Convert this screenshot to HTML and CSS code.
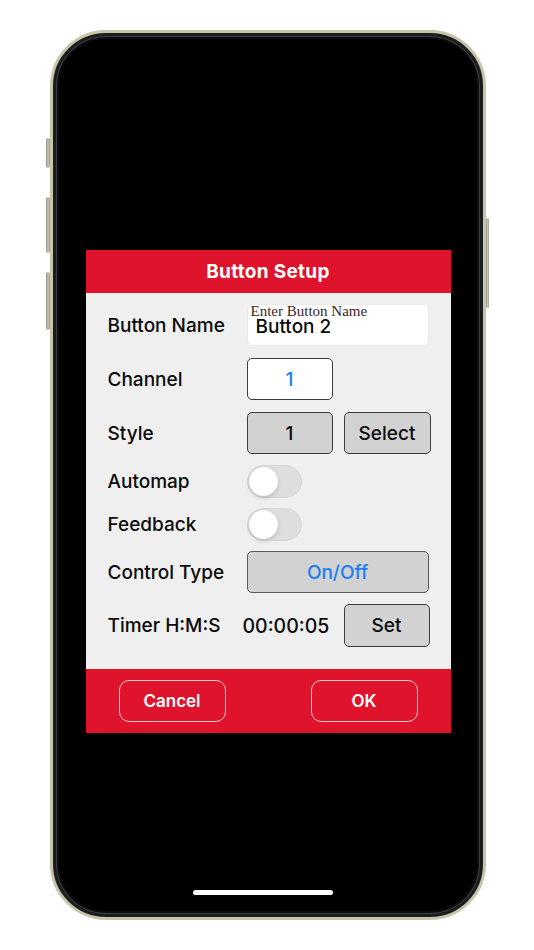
FILE: index.html
```html
<!DOCTYPE html>
<html lang="en">
<head>
<meta charset="utf-8">
<title>Button Setup</title>
<link rel="stylesheet" href="styles.css">
</head>
<body>
<div class="phone">
  <span class="side-btn mute"></span>
  <span class="side-btn vol-up"></span>
  <span class="side-btn vol-down"></span>
  <span class="side-btn power"></span>
  <div class="dialog">
    <div class="dlg-header">Button Setup</div>
    <div class="dlg-body">
      <div class="row r-name">
        <span class="label">Button Name</span>
        <div class="textfield">
          <span class="placeholder">Enter Button Name</span>
          <span class="tf-value">Button 2</span>
        </div>
      </div>
      <div class="row r-channel">
        <span class="label">Channel</span>
        <div class="box white blue">1</div>
      </div>
      <div class="row r-style">
        <span class="label">Style</span>
        <div class="box gray">1</div>
        <div class="box gray second">Select</div>
      </div>
      <div class="row r-automap">
        <span class="label">Automap</span>
        <span class="toggle"><span class="knob"></span></span>
      </div>
      <div class="row r-feedback">
        <span class="label">Feedback</span>
        <span class="toggle"><span class="knob"></span></span>
      </div>
      <div class="row r-control">
        <span class="label">Control Type</span>
        <div class="box gray wide blue">On/Off</div>
      </div>
      <div class="row r-timer">
        <span class="label">Timer H:M:S</span>
        <span class="timer">00:00:05</span>
        <div class="box gray set">Set</div>
      </div>
    </div>
    <div class="dlg-footer">
      <button class="footer-btn">Cancel</button>
      <button class="footer-btn">OK</button>
    </div>
  </div>
  <div class="home-bar"></div>
</div>
</body>
</html>
```

FILE: styles.css
```css
html, body {
  margin: 0;
  padding: 0;
  background: #ffffff;
}

body {
  width: 534px;
  height: 950px;
  overflow: hidden;
  font-family: "Inter", "Liberation Sans", sans-serif;
}

.phone {
  position: relative;
  box-sizing: border-box;
  width: 436px;
  height: 890px;
  margin: 30px 0 0 50px;
  padding-top: 217px;
  background: #000;
  border: 3px solid #c8c5aa;
  border-radius: 56px;
  box-shadow: inset 0 0 0 3px #1b1c1e, inset 0 0 0 4px #3a3e44, inset 0 0 0 6px #0c0c0c;
  display: flex;
  flex-direction: column;
  align-items: center;
}

.side-btn {
  position: absolute;
  background: linear-gradient(90deg, #8f8e84, #c9c7b4 50%, #9c9b90);
  border-radius: 2px;
}

.mute { left: -7px; top: 105px; width: 4px; height: 30px; }
.vol-up { left: -7px; top: 164px; width: 4px; height: 56px; }
.vol-down { left: -7px; top: 239px; width: 4px; height: 58px; }
.power { right: -6px; top: 185px; width: 3px; height: 90px; }

.dialog {
  width: 365px;
  display: flex;
  flex-direction: column;
}

.dlg-header {
  height: 43px;
  background: #df132b;
  color: #fff;
  font-weight: 700;
  font-size: 19px;
  letter-spacing: 0.3px;
  display: flex;
  align-items: center;
  justify-content: center;
}

.dlg-body {
  background: #efefef;
  padding: 11px 20px 22px 22px;
  display: flex;
  flex-direction: column;
}

.row {
  display: flex;
  align-items: center;
}

.r-channel { margin-top: 12px; }
.r-style { margin-top: 12px; }
.r-automap { margin-top: 11px; }
.r-feedback { margin-top: 10px; }
.r-control { margin-top: 10px; }
.r-timer { margin-top: 11px; }

.label {
  width: 139px;
  flex: none;
  font-size: 19px;
  font-weight: 500;
  color: #0a0a0a;
}

.textfield {
  position: relative;
  box-sizing: border-box;
  width: 182px;
  height: 42px;
  background: #fff;
  border-radius: 6px;
  border: 1px solid #ebebeb;
  display: flex;
  align-items: center;
  padding-left: 8px;
  padding-top: 3px;
}

.placeholder {
  position: absolute;
  left: 3px;
  top: -1px;
  font-family: "Liberation Serif", serif;
  font-size: 15px;
  line-height: 15px;
  color: #3a2626;
}

.tf-value {
  font-size: 19px;
  font-weight: 500;
  color: #0a0a0a;
}

.box {
  box-sizing: border-box;
  width: 86px;
  height: 42px;
  border: 1px solid #3c3c3c;
  border-radius: 5px;
  display: flex;
  align-items: center;
  justify-content: center;
  font-size: 19px;
  font-weight: 500;
  color: #0a0a0a;
}

.box.white { background: #fff; }
.box.gray { background: #d2d2d2; }
.box.blue { color: #1a7ff5; }
.box.second { margin-left: 11px; width: 87px; }
.box.wide { width: 182px; border-color: #5a5a5a; }
.box.set { width: 86px; height: 43px; }

.toggle {
  position: relative;
  box-sizing: border-box;
  width: 55px;
  height: 33px;
  border-radius: 17px;
  background: #dedede;
  border: 1px solid #d6d6d6;
}

.knob {
  position: absolute;
  left: 1px;
  top: 1px;
  width: 29px;
  height: 29px;
  border-radius: 50%;
  background: #fff;
  box-shadow: 0 2px 4px rgba(0, 0, 0, 0.15), 0 0 1px rgba(0, 0, 0, 0.1);
}

.timer {
  width: 90px;
  margin-left: -4px;
  margin-right: 11px;
  font-size: 19.5px;
  font-weight: 500;
  color: #0a0a0a;
}

.dlg-footer {
  height: 64px;
  background: #df132b;
  display: flex;
  align-items: center;
  justify-content: space-between;
  padding: 0 33px;
}

.footer-btn {
  box-sizing: border-box;
  width: 107px;
  height: 42px;
  background: transparent;
  border: 1px solid rgba(255, 255, 255, 0.78);
  border-radius: 10px;
  color: #fff;
  font-family: "Inter", "Liberation Sans", sans-serif;
  font-weight: 600;
  font-size: 17px;
  padding: 0;
}

.home-bar {
  margin-top: 157px;
  margin-right: 10px;
  width: 140px;
  height: 5px;
  border-radius: 3px;
  background: #fff;
}
```
